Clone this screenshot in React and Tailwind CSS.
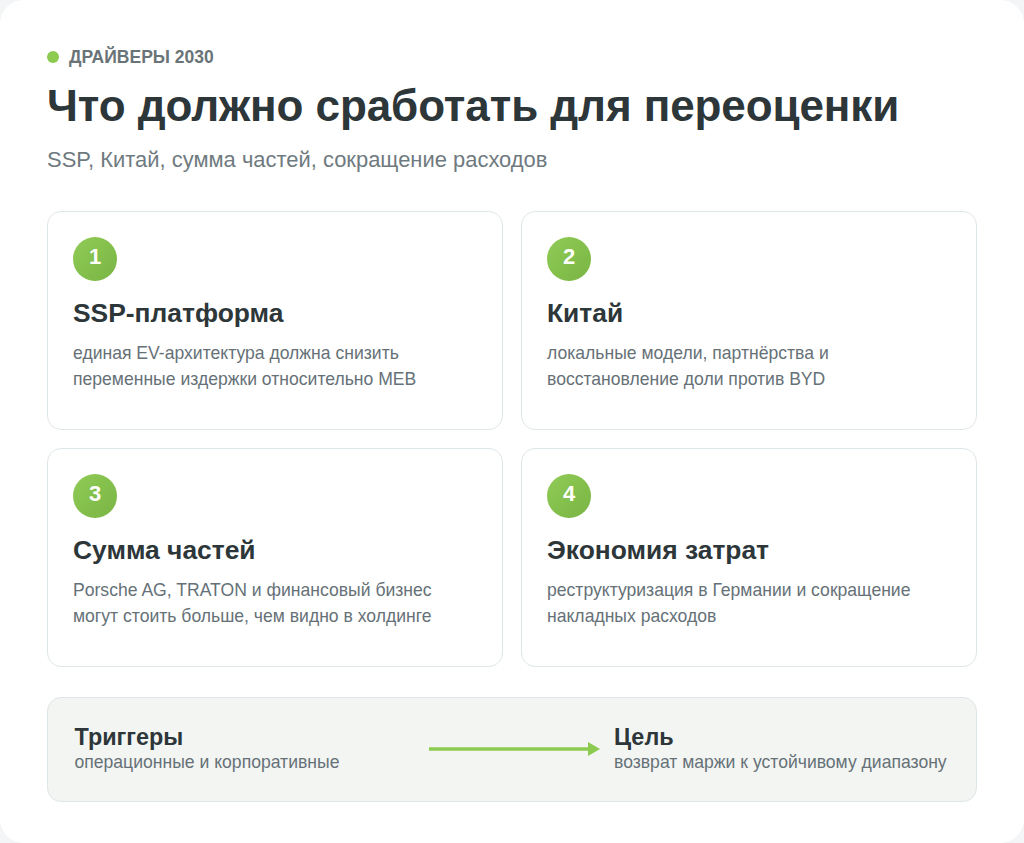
const cards = [
  { n: 1, title: "SSP-платформа", lines: ["единая EV-архитектура должна снизить", "переменные издержки относительно MEB"] },
  { n: 2, title: "Китай", lines: ["локальные модели, партнёрства и", "восстановление доли против BYD"] },
  { n: 3, title: "Сумма частей", lines: ["Porsche AG, TRATON и финансовый бизнес", "могут стоить больше, чем видно в холдинге"] },
  { n: 4, title: "Экономия затрат", lines: ["реструктуризация в Германии и сокращение", "накладных расходов"] },
];

const Card = ({ n, title, lines }) => (
  <div className="h-[219px] rounded-[14px] border border-[#dfe6ea] bg-white px-[25px] pt-[25px]">
    <div className="flex h-11 w-11 items-center justify-center rounded-full bg-gradient-to-br from-[#8fcb55] to-[#7ab544] pb-[5px] text-[22px] font-bold text-white">
      {n}
    </div>
    <h2 className="mt-[14px] text-[26.4px] font-bold leading-[36px] text-[#2d3639]">{title}</h2>
    <p className="mt-[9px] text-[17.58px] leading-[26.4px] text-[#667177]">
      {lines[0]}
      <br />
      {lines[1]}
    </p>
  </div>
);

export default function App() {
  return (
    <div className="h-[843px] w-[1024px] overflow-hidden bg-[#f3f5f6] font-['Liberation_Sans',sans-serif]">
      <div className="h-full rounded-[24px] bg-white px-[47px] pt-[46px]">
        <div className="flex h-[22px] items-center gap-[10px]">
          <span className="h-3 w-3 rounded-full bg-[#8ccb4f]" />
          <span className="text-[17.5px] font-bold text-[#6a7478]">ДРАЙВЕРЫ 2030</span>
        </div>
        <h1 className="mt-[10px] text-[44px] font-bold leading-[56px] tracking-[-0.09px] text-[#2d3639]">
          Что должно сработать для переоценки
        </h1>
        <p className="mt-[12px] text-[21.95px] leading-[28px] text-[#6f7a80]">
          SSP, Китай, сумма частей, сокращение расходов
        </p>
        <div className="mt-[37px] grid grid-cols-2 gap-[18px]">
          {cards.map((c) => (
            <Card key={c.n} {...c} />
          ))}
        </div>
        <div className="mt-[30px] flex h-[105px] items-center rounded-[14px] border border-[#dfe6ea] bg-[#f3f5f3] pl-[26.5px]">
          <div className="-mt-[2px] w-[354.5px]">
            <div className="text-[23.4px] font-bold leading-[28px] text-[#2d3639]">Триггеры</div>
            <div className="text-[17.58px] leading-[23px] text-[#667177]">операционные и корпоративные</div>
          </div>
          <svg width="172" height="16" viewBox="0 0 172 16" className="-mt-[2px] shrink-0">
            <path d="M0 8H160" stroke="#8ccb4f" strokeWidth="3.5" />
            <path d="M159 1L171 8L159 15Z" fill="#8ccb4f" />
          </svg>
          <div className="-mt-[2px] ml-[13px]">
            <div className="text-[23.4px] font-bold leading-[28px] text-[#2d3639]">Цель</div>
            <div className="text-[17.58px] leading-[23px] text-[#667177]">возврат маржи к устойчивому диапазону</div>
          </div>
        </div>
      </div>
    </div>
  );
}
